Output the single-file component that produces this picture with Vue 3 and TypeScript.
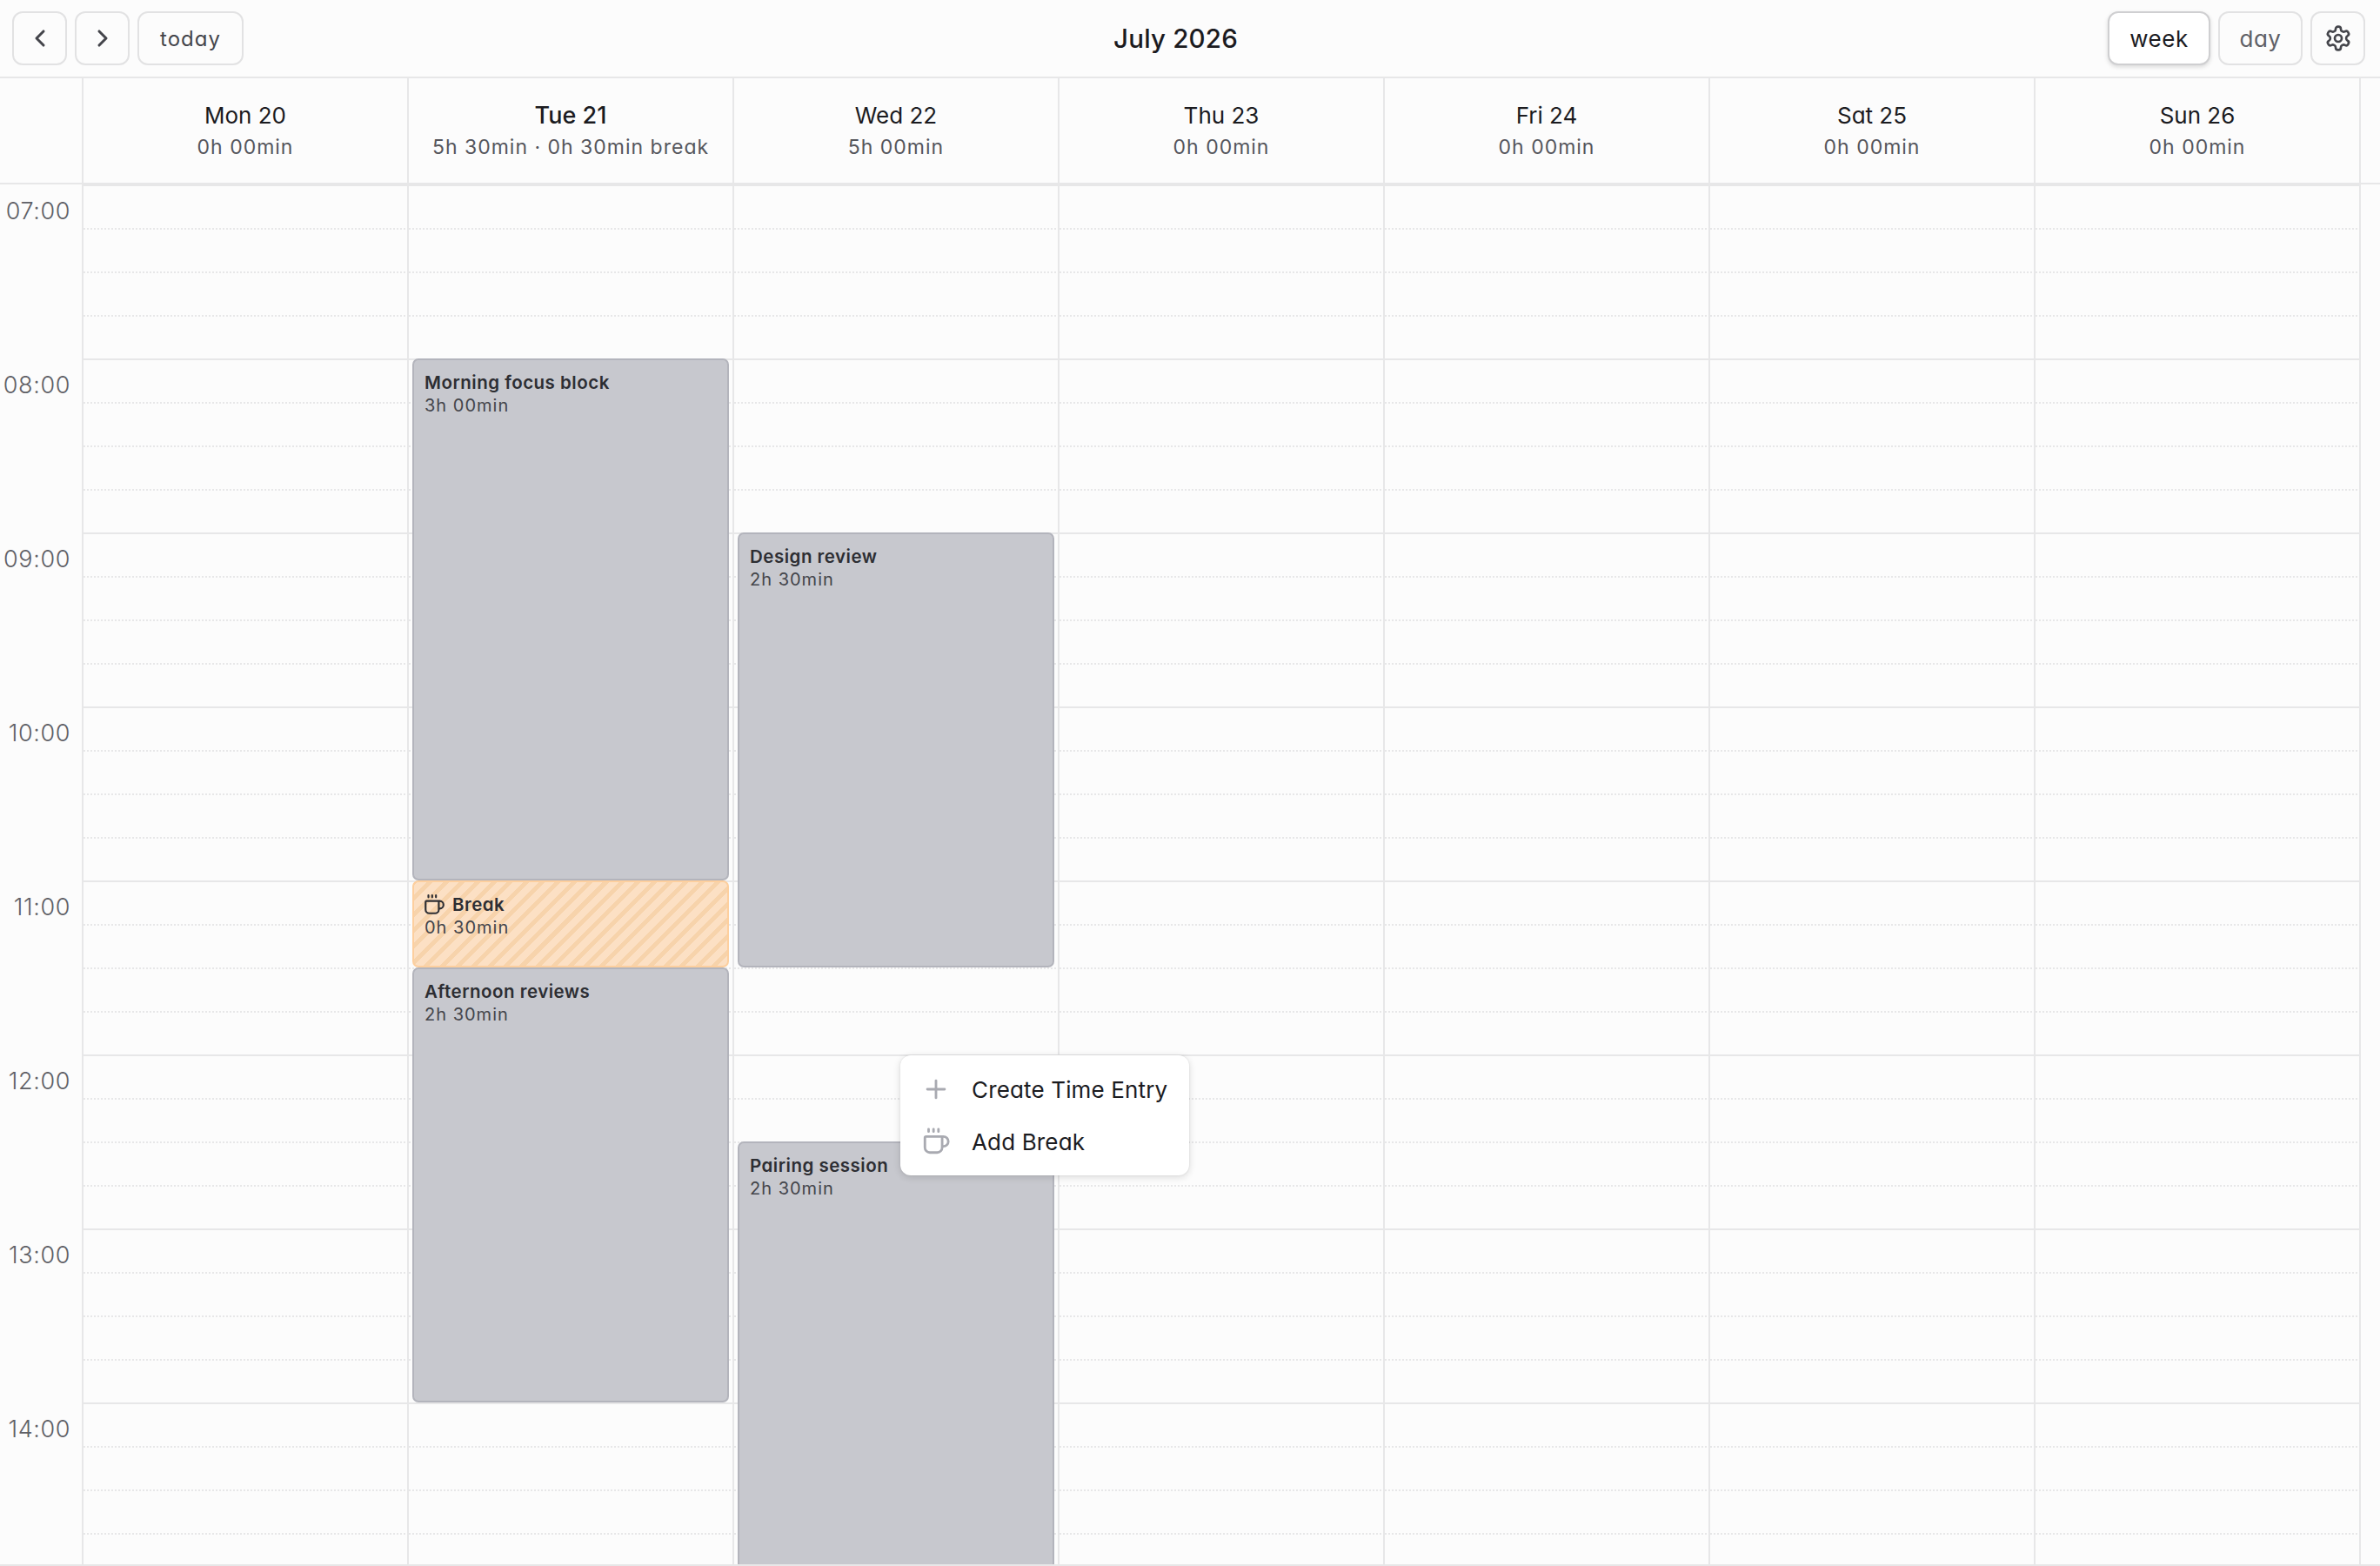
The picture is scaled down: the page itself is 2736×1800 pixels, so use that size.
<script setup lang="ts">
interface Day {
  label: string;
  total: string;
  strong?: boolean;
}

interface CalEvent {
  day: number;
  title: string;
  time: string;
  start: number;
  hours: number;
  isBreak?: boolean;
}

const days: Day[] = [
  { label: "Mon 20", total: "0h 00min" },
  { label: "Tue 21", total: "5h 30min · 0h 30min break", strong: true },
  { label: "Wed 22", total: "5h 00min" },
  { label: "Thu 23", total: "0h 00min" },
  { label: "Fri 24", total: "0h 00min" },
  { label: "Sat 25", total: "0h 00min" },
  { label: "Sun 26", total: "0h 00min" },
];

const hours = ["07:00", "08:00", "09:00", "10:00", "11:00", "12:00", "13:00", "14:00"];

const events: CalEvent[] = [
  { day: 1, title: "Morning focus block", time: "3h 00min", start: 1, hours: 3 },
  { day: 1, title: "Break", time: "0h 30min", start: 4, hours: 0.5, isBreak: true },
  { day: 1, title: "Afternoon reviews", time: "2h 30min", start: 4.5, hours: 2.5 },
  { day: 2, title: "Design review", time: "2h 30min", start: 2, hours: 2.5 },
  { day: 2, title: "Pairing session", time: "2h 30min", start: 5.5, hours: 2.5 },
];

const HOUR = 200;

function eventsFor(day: number) {
  return events.filter((e) => e.day === day);
}

function eventBox(e: CalEvent) {
  return { top: e.start * HOUR + "px", height: e.hours * HOUR + "px" };
}
</script>

<template>
  <div class="calendar">
    <header class="toolbar">
      <div class="group">
        <button class="btn icon-btn">
          <svg viewBox="0 0 24 24" class="ico chev"><path d="m15 18-6-6 6-6" /></svg>
        </button>
        <button class="btn icon-btn">
          <svg viewBox="0 0 24 24" class="ico chev"><path d="m9 18 6-6-6-6" /></svg>
        </button>
        <button class="btn today">today</button>
      </div>
      <h1 class="title">July 2026</h1>
      <div class="group">
        <button class="btn view active">week</button>
        <button class="btn view">day</button>
        <button class="btn icon-btn">
          <svg viewBox="0 0 24 24" class="ico gear">
            <path d="M12.22 2h-.44a2 2 0 0 0-2 2v.18a2 2 0 0 1-1 1.73l-.43.25a2 2 0 0 1-2 0l-.15-.08a2 2 0 0 0-2.73.73l-.22.38a2 2 0 0 0 .73 2.73l.15.1a2 2 0 0 1 1 1.72v.51a2 2 0 0 1-1 1.74l-.15.09a2 2 0 0 0-.73 2.73l.22.38a2 2 0 0 0 2.73.73l.15-.08a2 2 0 0 1 2 0l.43.25a2 2 0 0 1 1 1.73V20a2 2 0 0 0 2 2h.44a2 2 0 0 0 2-2v-.18a2 2 0 0 1 1-1.73l.43-.25a2 2 0 0 1 2 0l.15.08a2 2 0 0 0 2.73-.73l.22-.39a2 2 0 0 0-.73-2.73l-.15-.08a2 2 0 0 1-1-1.74v-.5a2 2 0 0 1 1-1.74l.15-.09a2 2 0 0 0 .73-2.73l-.22-.38a2 2 0 0 0-2.73-.73l-.15.08a2 2 0 0 1-2 0l-.43-.25a2 2 0 0 1-1-1.73V4a2 2 0 0 0-2-2z" />
            <circle cx="12" cy="12" r="3" />
          </svg>
        </button>
      </div>
    </header>

    <div class="head-row">
      <div class="gutter"></div>
      <div v-for="d in days" :key="d.label" class="head-cell">
        <div class="day-name" :class="{ strong: d.strong }">{{ d.label }}</div>
        <div class="day-total">{{ d.total }}</div>
      </div>
      <div class="end-cell"></div>
    </div>

    <div class="body-row">
      <div class="gutter">
        <div v-for="h in hours" :key="h" class="hour-label">{{ h }}</div>
      </div>
      <div v-for="(d, i) in days" :key="d.label" class="day-col">
        <div v-for="h in hours" :key="h" class="hour">
          <div class="slot"></div>
          <div class="slot dotted"></div>
          <div class="slot dotted"></div>
          <div class="slot dotted"></div>
        </div>
        <div
          v-for="e in eventsFor(i)"
          :key="e.title"
          class="event"
          :class="{ break: e.isBreak }"
          :style="eventBox(e)"
        >
          <div class="event-title">
            <svg v-if="e.isBreak" viewBox="0 0 24 24" class="cup">
              <path d="M10 2v2M14 2v2M6 2v2M16 8a1 1 0 0 1 1 1v8a4 4 0 0 1-4 4H7a4 4 0 0 1-4-4V9a1 1 0 0 1 1-1h14a4 4 0 1 1 0 8h-1" />
            </svg>
            {{ e.title }}
          </div>
          <div class="event-time">{{ e.time }}</div>
        </div>
      </div>
      <div class="end-col"></div>
    </div>

    <div class="menu">
      <div class="menu-item">
        <svg viewBox="0 0 24 24" class="menu-ico plus"><path d="M5 12h14M12 5v14" /></svg>
        <span>Create Time Entry</span>
      </div>
      <div class="menu-item">
        <svg viewBox="0 0 24 24" class="menu-ico">
          <path d="M10 2v2M14 2v2M6 2v2M16 8a1 1 0 0 1 1 1v8a4 4 0 0 1-4 4H7a4 4 0 0 1-4-4V9a1 1 0 0 1 1-1h14a4 4 0 1 1 0 8h-1" />
        </svg>
        <span>Add Break</span>
      </div>
    </div>
  </div>
</template>

<style scoped>
.calendar {
  position: relative;
  width: 2736px;
  height: 1800px;
  display: flex;
  flex-direction: column;
  background: #fcfcfc;
  border-bottom: 2px solid #e7e7e8;
  box-sizing: border-box;
  overflow: hidden;
  color: #1b1b1f;
  font-family: Inter, "Liberation Sans", sans-serif;
  font-feature-settings: "cv11" 1;
}

.toolbar {
  height: 90px;
  flex: none;
  box-sizing: border-box;
  padding: 13px 17px 13px 14px;
  display: flex;
  justify-content: space-between;
  align-items: flex-start;
  border-bottom: 2px solid #e7e7e8;
}

.group {
  display: flex;
  gap: 9px;
}

.btn {
  height: 62px;
  box-sizing: border-box;
  border: 2px solid #e2e2e3;
  border-radius: 12px;
  background: #fcfcfc;
  color: #44454b;
  font-family: inherit;
  font-feature-settings: inherit;
  padding: 0;
  display: flex;
  align-items: center;
  justify-content: center;
}

.icon-btn {
  width: 63px;
}

.today {
  width: 122px;
  font-size: 24px;
  letter-spacing: 1px;
}

.view {
  font-size: 26px;
  letter-spacing: 0.5px;
  color: #5f6066;
  width: 97px;
}

.view.active {
  width: 118px;
  background: #fff;
  color: #1b1b1f;
  border-color: #cfcfd1;
  box-shadow: 0 2px 5px rgba(0, 0, 0, 0.14);
}

.ico {
  width: 32px;
  height: 32px;
  fill: none;
  stroke: #44454b;
  stroke-width: 2;
  stroke-linecap: round;
  stroke-linejoin: round;
}

.chev {
  stroke-width: 2.3;
}

.title {
  margin: 12px 0 0;
  text-align: center;
  font-size: 29.5px;
  line-height: 38px;
  font-weight: 500;
  letter-spacing: 0.2px;
}

.head-row,
.body-row {
  display: grid;
  grid-template-columns: 94px repeat(7, 374px) 1fr;
}

.head-row {
  height: 122px;
  flex: none;
  box-sizing: border-box;
  border-bottom: 2px solid #e7e7e8;
}

.head-cell {
  border-left: 2px solid #e7e7e8;
  text-align: center;
  padding-top: 26px;
}

.end-cell {
  border-left: 2px solid #e7e7e8;
}

.day-name {
  font-size: 26px;
  line-height: 34px;
  font-weight: 400;
}

.day-name.strong {
  font-size: 27px;
  font-weight: 500;
}

.day-total {
  margin-top: 5px;
  font-size: 23px;
  line-height: 28px;
  letter-spacing: 1px;
  color: #55565c;
}

.body-row {
  flex: 1;
  min-height: 0;
  overflow: hidden;
}

.hour-label {
  height: 200px;
  box-sizing: border-box;
  padding: 13px 13px 0 0;
  text-align: right;
  font-size: 27px;
  line-height: 36px;
  font-weight: 300;
  letter-spacing: 0.6px;
  color: #5f6066;
}

.day-col {
  position: relative;
  border-left: 2px solid #e7e7e8;
}

.hour {
  height: 200px;
  box-sizing: border-box;
  border-top: 2px solid #e7e7e8;
  margin-right: -2px;
}

.slot {
  height: 50px;
  box-sizing: border-box;
}

.slot:first-child {
  height: 48px;
}

.slot.dotted {
  border-top: 2px dotted #e7e7e8;
  margin-right: 4px;
}

.end-col {
  border-left: 2px solid #e7e7e8;
}

.event {
  position: absolute;
  left: 4px;
  right: 4px;
  box-sizing: border-box;
  background: #c7c8ce;
  border: 2px solid #b3b4bc;
  border-radius: 7px;
  padding: 13px 12px;
  color: #2d2e33;
}

.event.break {
  border-color: #fdcf9e;
  background: repeating-linear-gradient(
    -45deg,
    #fce0c4 0 8px,
    #f7d3ab 8px 13px
  );
}

.event-title {
  display: flex;
  align-items: center;
  gap: 8px;
  font-size: 20.5px;
  line-height: 26px;
  font-weight: 600;
  letter-spacing: 0.5px;
}

.event-time {
  font-size: 20px;
  line-height: 26px;
  letter-spacing: 1px;
  color: #44454b;
}

.cup {
  width: 26px;
  height: 26px;
  margin-left: -2px;
  fill: none;
  stroke: #2d2e33;
  stroke-width: 2;
  stroke-linecap: round;
  stroke-linejoin: round;
}

.menu {
  position: absolute;
  left: 1035px;
  top: 1213px;
  width: 332px;
  height: 138px;
  box-sizing: border-box;
  padding: 9px 0;
  background: #fff;
  border-radius: 12px;
  box-shadow: 0 2px 8px rgba(0, 0, 0, 0.14), 0 0 2px rgba(0, 0, 0, 0.1);
}

.menu-item {
  height: 60px;
  display: flex;
  align-items: center;
  padding-left: 24px;
  gap: 24px;
  font-size: 26px;
  letter-spacing: 0.15px;
}

.menu-ico {
  width: 34px;
  height: 34px;
  flex: none;
  fill: none;
  stroke: #a9aab1;
  stroke-width: 2;
  stroke-linecap: round;
  stroke-linejoin: round;
}
</style>

<style>
html,
body {
  margin: 0;
  background: #fcfcfc;
}
</style>
